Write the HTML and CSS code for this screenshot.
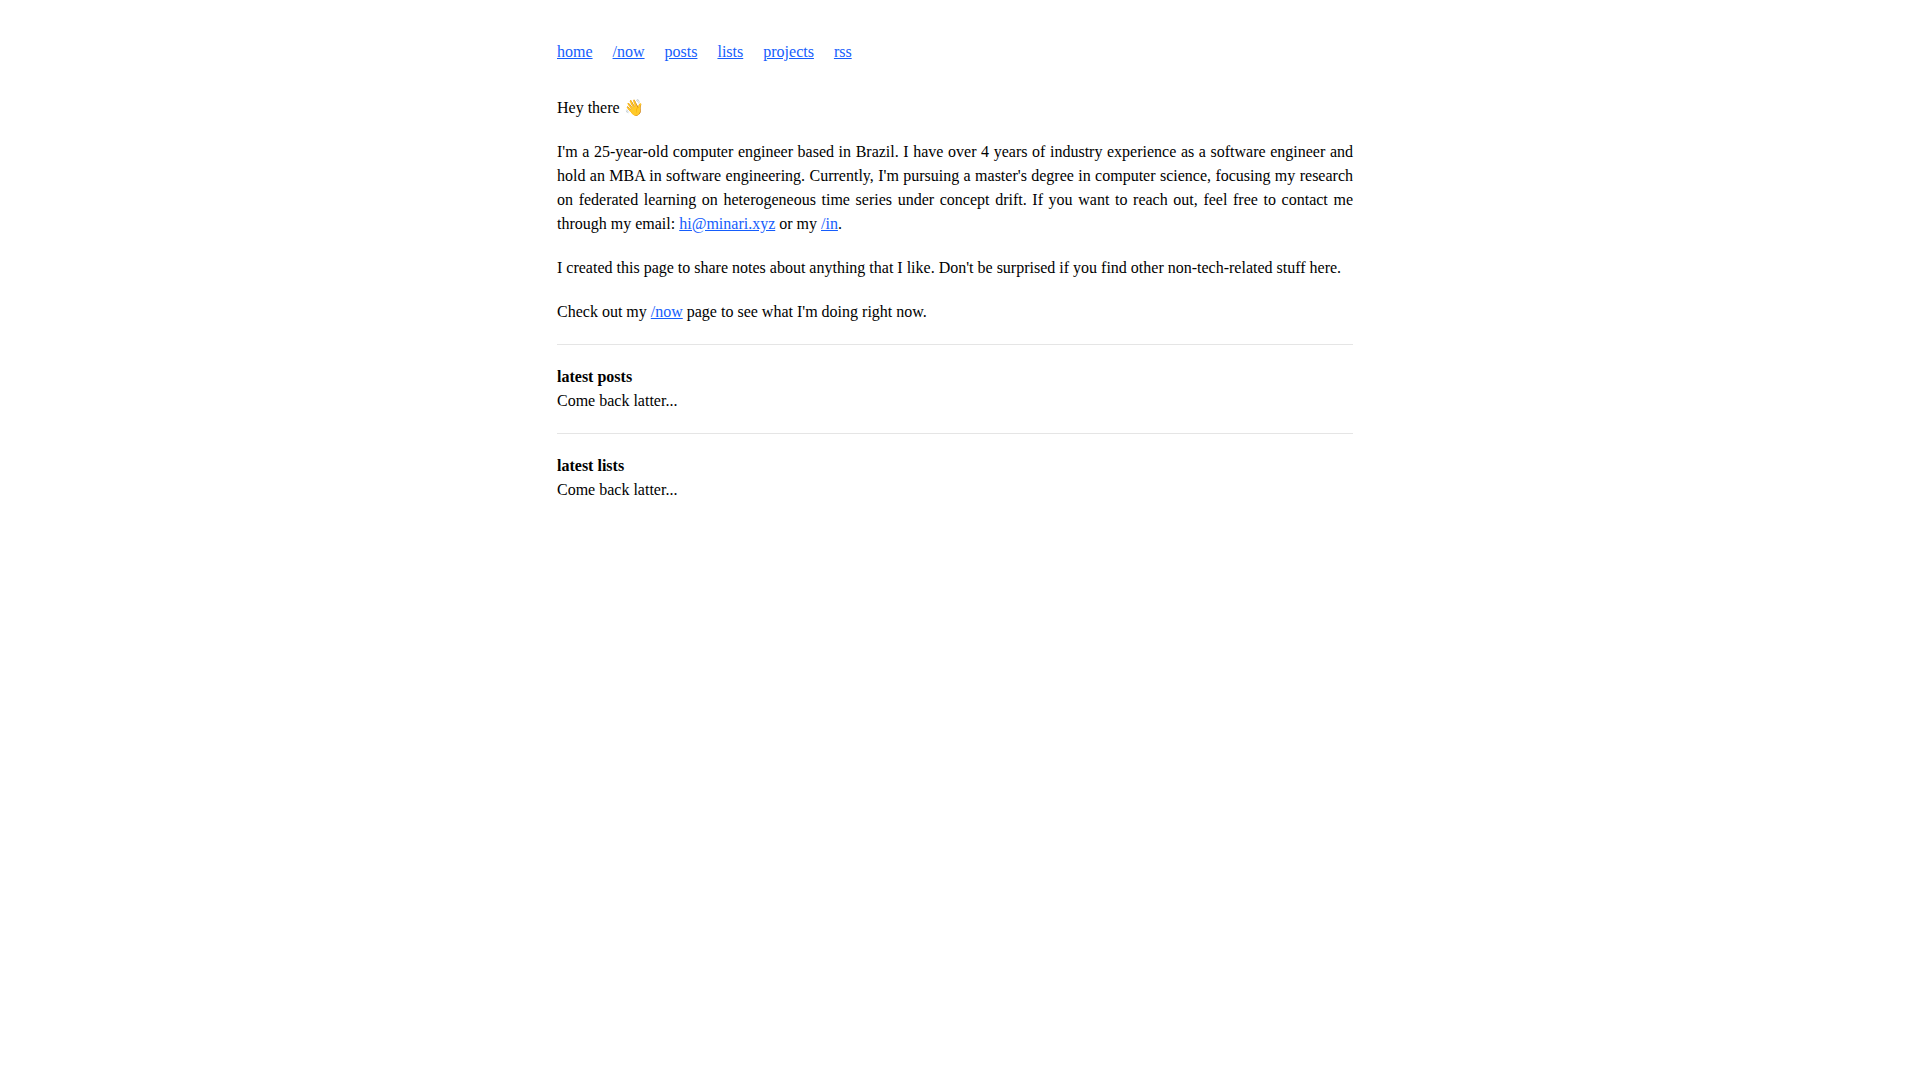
FILE: index.html
```html
<!DOCTYPE html>
<html lang="en">
<head>
  <meta charset="UTF-8">
  <meta name="viewport" content="width=device-width, initial-scale=1">
  <title>home</title>
  <link rel="stylesheet" href="styles.css">
</head>
<body>

  <div class="container">
    <nav class="menu">
      <a href="/">home</a>
      <a href="/now">/now</a>
      <a href="/posts">posts</a>
      <a href="/lists">lists</a>
      <a href="/projects">projects</a>
      <a href="/rss.xml">rss</a>
    </nav>

    <main class="content">
      <p>Hey there 👋</p>
      <p>
        I'm a 25-year-old computer engineer based in Brazil. I have over 4 years of industry experience as a
        software engineer and hold an MBA in software engineering. Currently, I'm pursuing a master's degree in
        computer science, focusing my research on federated learning on heterogeneous time series under concept
        drift. If you want to reach out, feel free to contact me through my email:
        <a href="mailto:hi@minari.xyz">hi@minari.xyz</a> or my <a href="/in">/in</a>.
      </p>
      <p>
        I created this page to share notes about anything that I like. Don't be surprised if you find other
        non-tech-related stuff here.
      </p>
      <p>Check out my <a href="/now">/now</a> page to see what I'm doing right now.</p>

      <section class="latest">
        <h2>latest posts</h2>
        <p>Come back latter...</p>
      </section>

      <section class="latest">
        <h2>latest lists</h2>
        <p>Come back latter...</p>
      </section>
    </main>
  </div>

</body>
</html>
```
FILE: styles.css
```css
* {
  box-sizing: border-box;
}

body {
  margin: 0;
  padding-right: 10px;
  background-color: #ffffff;
  color: #000000;
  font-family: "Liberation Serif", "Times New Roman", serif;
  font-size: 16px;
  line-height: 24px;
}

a {
  color: #155dfc;
  text-decoration: underline;
}

p,
h2 {
  margin: 0;
}

.container {
  max-width: 836px;
  margin: 0 auto;
  padding: 40px 20px;
}

.menu {
  display: flex;
  flex-wrap: wrap;
  gap: 20px;
  margin-bottom: 32px;
}

.content {
  display: flex;
  flex-direction: column;
  gap: 20px;
  text-align: justify;
}

.latest {
  border-top: 1px solid #e5e5e5;
  padding-top: 20px;
}

.latest h2 {
  font-size: 16px;
  font-weight: bold;
}
```
